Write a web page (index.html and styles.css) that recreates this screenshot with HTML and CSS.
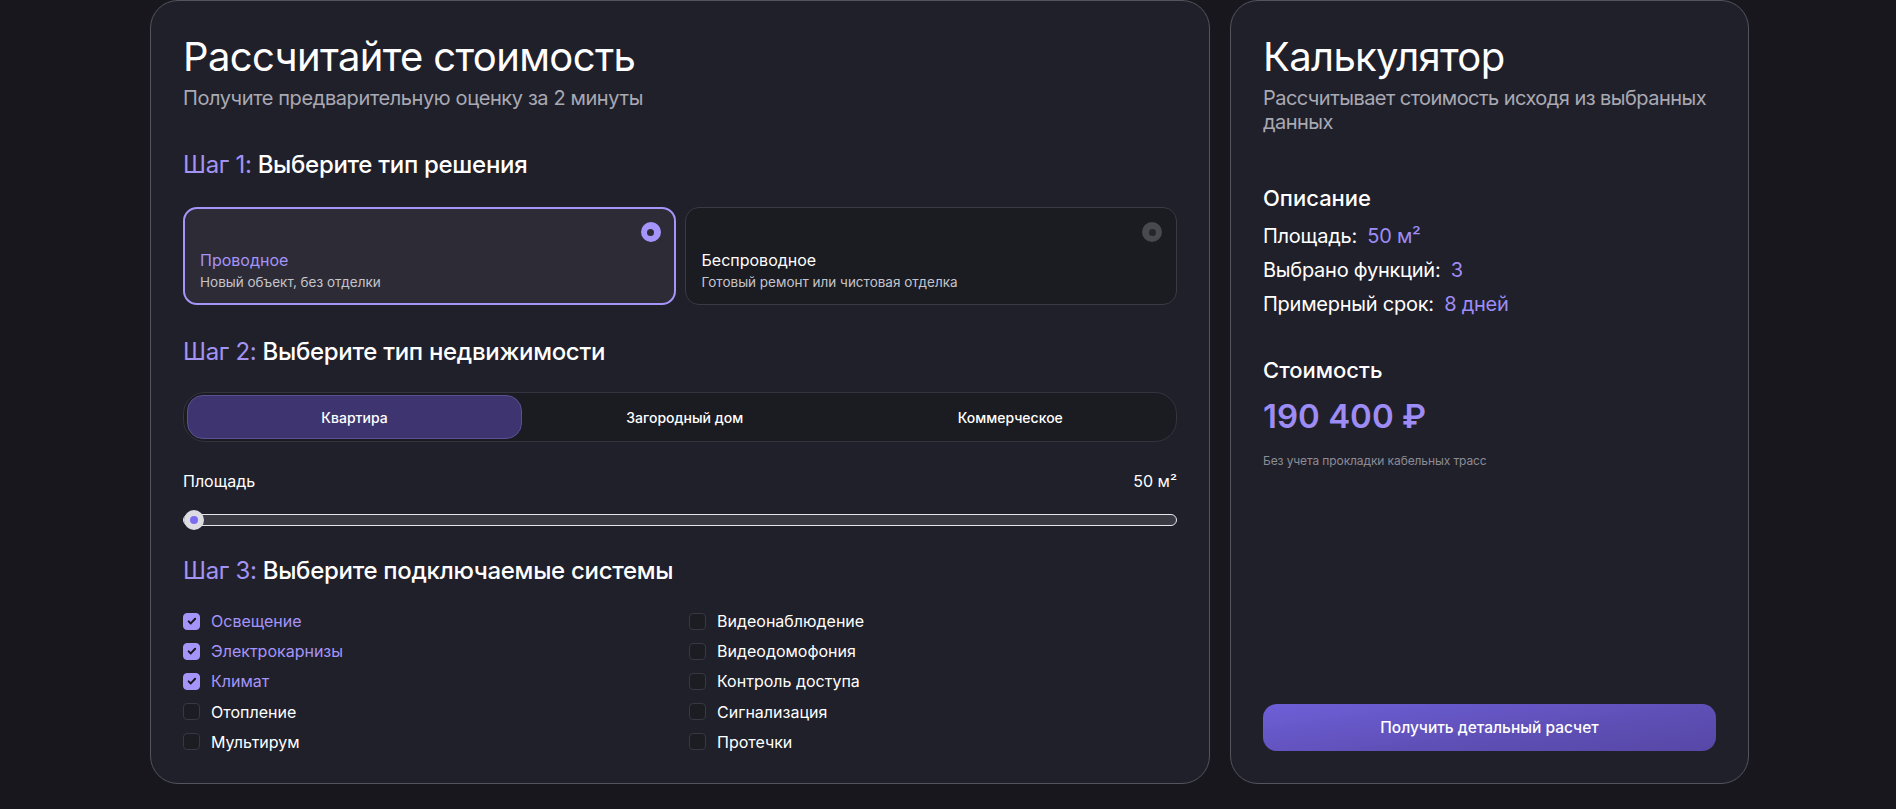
FILE: index.html
```html
<!DOCTYPE html>
<html lang="ru">
<head>
<meta charset="utf-8">
<title>Расчёт стоимости</title>
<link rel="stylesheet" href="styles.css">
</head>
<body>
<main class="layout">
  <section class="card calc">
    <h1 class="card-title">Рассчитайте стоимость</h1>
    <p class="card-subtitle">Получите предварительную оценку за 2 минуты</p>

    <h2 class="step"><span class="step-num">Шаг 1:</span> Выберите тип решения</h2>
    <div class="options">
      <div class="option is-active">
        <span class="radio"></span>
        <div class="option-name">Проводное</div>
        <div class="option-desc">Новый объект, без отделки</div>
      </div>
      <div class="option">
        <span class="radio"></span>
        <div class="option-name">Беспроводное</div>
        <div class="option-desc">Готовый ремонт или чистовая отделка</div>
      </div>
    </div>

    <h2 class="step step-2"><span class="step-num">Шаг 2:</span> Выберите тип недвижимости</h2>
    <div class="segments">
      <div class="segment is-active">Квартира</div>
      <div class="segment">Загородный дом</div>
      <div class="segment">Коммерческое</div>
    </div>

    <div class="area-row">
      <span>Площадь</span>
      <span>50 м²</span>
    </div>
    <div class="range">
      <div class="range-track"></div>
      <div class="range-thumb"></div>
    </div>

    <h2 class="step step-3"><span class="step-num">Шаг 3:</span> Выберите подключаемые системы</h2>
    <div class="systems">
      <label class="check is-checked"><span class="box"><svg viewBox="0 0 16 16"><path d="M4.2 8.4l2.4 2.4 5-5.4"/></svg></span>Освещение</label>
      <label class="check"><span class="box"></span>Видеонаблюдение</label>
      <label class="check is-checked"><span class="box"><svg viewBox="0 0 16 16"><path d="M4.2 8.4l2.4 2.4 5-5.4"/></svg></span>Электрокарнизы</label>
      <label class="check"><span class="box"></span>Видеодомофония</label>
      <label class="check is-checked"><span class="box"><svg viewBox="0 0 16 16"><path d="M4.2 8.4l2.4 2.4 5-5.4"/></svg></span>Климат</label>
      <label class="check"><span class="box"></span>Контроль доступа</label>
      <label class="check"><span class="box"></span>Отопление</label>
      <label class="check"><span class="box"></span>Сигнализация</label>
      <label class="check"><span class="box"></span>Мультирум</label>
      <label class="check"><span class="box"></span>Протечки</label>
    </div>
  </section>

  <aside class="card summary">
    <h1 class="card-title">Калькулятор</h1>
    <p class="card-subtitle summary-subtitle">Рассчитывает стоимость исходя из выбранных данных</p>

    <h3 class="summary-head">Описание</h3>
    <ul class="facts">
      <li>Площадь: <span class="accent">50 м²</span></li>
      <li>Выбрано функций: <span class="accent">3</span></li>
      <li>Примерный срок: <span class="accent">8 дней</span></li>
    </ul>

    <h3 class="summary-head price-head">Стоимость</h3>
    <div class="price">190 400 ₽</div>
    <p class="note">Без учета прокладки кабельных трасс</p>

    <button class="cta" type="button">Получить детальный расчет</button>
  </aside>
</main>
</body>
</html>
```

FILE: styles.css
```css
* {
  box-sizing: border-box;
}

html, body {
  margin: 0;
  background: #17171d;
  color: #ffffff;
  font-family: "Inter", "Noto Sans", "Liberation Sans", sans-serif;
}

.layout {
  display: flex;
  gap: 20px;
  width: 1600px;
  margin: 0 0 0 150px;
}

.card {
  height: 784px;
  background: #20202a;
  border: 1px solid #54545e;
  border-radius: 28px;
  padding: 32px;
  display: flex;
  flex-direction: column;
}

.card > * {
  flex-shrink: 0;
}

.calc {
  width: 1060px;
  padding-bottom: 26px;
}

.summary {
  width: 519px;
}

.card-title {
  margin: 0;
  font-size: 40px;
  line-height: 48px;
  font-weight: 400;
  letter-spacing: -0.65px;
}

.card-subtitle {
  margin: 5px 0 0;
  font-size: 20px;
  line-height: 24px;
  color: #a9a9b4;
  letter-spacing: -0.4px;
}

.summary-subtitle {
  letter-spacing: -0.55px;
}

/* step headings */
.step {
  margin: 40px 0 0;
  font-size: 24px;
  line-height: 30px;
  font-weight: 500;
  letter-spacing: -0.3px;
}

.step-num {
  color: #a393f4;
  font-weight: 400;
}

.step-2 {
  margin-top: 32px;
}

.step-3 {
  margin-top: 30px;
}

/* solution type */
.options {
  margin-top: 27px;
  display: grid;
  grid-template-columns: 1fr 1fr;
  gap: 9px;
}

.option {
  position: relative;
  height: 98px;
  border-radius: 14px;
  border: 1px solid #3a3a44;
  background: #1b1b22;
  padding: 0 16px 13px;
  display: flex;
  flex-direction: column;
  justify-content: flex-end;
}

.option.is-active {
  border: 2px solid #a594f9;
  background: #2c2b36;
  padding: 0 15px 12px;
}

.radio {
  position: absolute;
  top: 14px;
  right: 14px;
  width: 20px;
  height: 20px;
  border-radius: 50%;
  background: #48484f;
  display: flex;
  align-items: center;
  justify-content: center;
}

.radio::after {
  content: "";
  width: 7px;
  height: 7px;
  border-radius: 50%;
  background: #25252d;
}

.option.is-active .radio {
  top: 13px;
  right: 13px;
  background: #a594f9;
}

.option.is-active .radio::after {
  background: #2c2b36;
}

.option-name {
  font-size: 16px;
  line-height: 22px;
  color: #ffffff;
}

.option.is-active .option-name {
  color: #a594f9;
}

.option-desc {
  margin-top: 2px;
  font-size: 13.5px;
  line-height: 18px;
  color: #c4c4cc;
}

/* property type */
.segments {
  margin-top: 25px;
  height: 50px;
  border: 1px solid #34343e;
  border-radius: 22px;
  background: #1b1b22;
  padding: 2px 3px;
  display: grid;
  grid-template-columns: 335px 1fr 1fr;
}

.segment {
  display: flex;
  align-items: center;
  justify-content: center;
  border-radius: 16px;
  font-size: 14px;
  font-weight: 500;
  color: #ffffff;
}

.segment.is-active {
  background: #3e3570;
  border: 1px solid #5a5092;
}

/* area slider */
.area-row {
  margin-top: 27px;
  display: flex;
  justify-content: space-between;
  font-size: 16px;
  line-height: 24px;
}

.range {
  position: relative;
  margin-top: 21px;
  height: 12px;
}

.range-track {
  height: 12px;
  border: 1px solid #e6e6ea;
  border-radius: 6px;
  background: #3a3a44;
}

.range-thumb {
  position: absolute;
  top: -4px;
  left: 1px;
  width: 20px;
  height: 20px;
  border-radius: 50%;
  background: #dcdce2;
  display: flex;
  align-items: center;
  justify-content: center;
}

.range-thumb::after {
  content: "";
  width: 8px;
  height: 8px;
  border-radius: 50%;
  background: #7b6cf0;
}

/* connected systems */
.systems {
  margin-top: 23px;
  display: grid;
  grid-template-columns: 1fr 1fr;
  column-gap: 18px;
  row-gap: 6.2px;
}

.check {
  display: flex;
  align-items: center;
  gap: 11px;
  height: 24px;
  font-size: 16px;
  color: #ffffff;
}

.check.is-checked {
  color: #a594f9;
}

.box {
  flex: none;
  width: 17px;
  height: 17px;
  border-radius: 4px;
  border: 1px solid #383842;
  background: #1c1c23;
  display: flex;
  align-items: center;
  justify-content: center;
}

.check.is-checked .box {
  border-color: #a594f9;
  background: #a594f9;
}

.box svg {
  width: 14px;
  height: 14px;
  fill: none;
  stroke: #17171d;
  stroke-width: 2.2;
  stroke-linecap: round;
  stroke-linejoin: round;
}

/* summary card */
.summary-head {
  margin: 49px 0 0;
  font-size: 22px;
  line-height: 30px;
  font-weight: 500;
}

.price-head {
  margin-top: 39px;
}

.facts {
  list-style: none;
  margin: 11px 0 0;
  padding: 0;
  display: flex;
  flex-direction: column;
  gap: 10px;
}

.facts li {
  font-size: 20px;
  line-height: 24px;
  letter-spacing: -0.25px;
}

.accent {
  margin-left: 5px;
  color: #9d8cf5;
}

.price {
  margin-top: 11px;
  font-size: 33px;
  line-height: 40px;
  font-weight: 600;
  color: #9d8cf5;
}

.note {
  margin: 17px 0 0;
  font-size: 12px;
  line-height: 16px;
  color: #8c8c97;
  letter-spacing: -0.1px;
}

.cta {
  margin-top: auto;
  height: 47px;
  width: 100%;
  border: none;
  border-radius: 14px;
  background: linear-gradient(172deg, #6e5fd8 0%, #5e4fb6 60%, #5747a6 100%);
  color: #ffffff;
  font-family: inherit;
  font-size: 15.5px;
  font-weight: 500;
  cursor: pointer;
}
```
